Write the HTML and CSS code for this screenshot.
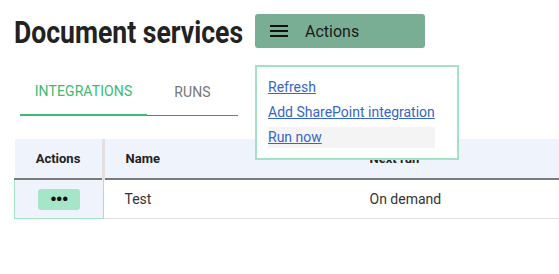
FILE: index.html
```html
<!DOCTYPE html>
<html lang="en">
<head>
    <meta charset="UTF-8">
    <title>Document services</title>
    <link rel="stylesheet" href="styles.css">
</head>
<body>
    <div class="page">
        <div class="header">
            <h1 class="title"><span class="title-text">Document services</span></h1>
            <div class="menu-wrap">
                <button class="actions-btn">
                    <svg class="burger" width="18" height="12" viewBox="0 0 18 12">
                        <rect x="0" y="0" width="18" height="2"/>
                        <rect x="0" y="5" width="18" height="2"/>
                        <rect x="0" y="10" width="18" height="2"/>
                    </svg>
                    <span>Actions</span>
                </button>
            </div>
        </div>

        <div class="tabs">
            <div class="tab active">INTEGRATIONS</div>
            <div class="tab">RUNS</div>
        </div>

        <div class="table-wrap">
            <table class="grid">
                <thead>
                    <tr>
                        <th class="col-actions">Actions</th>
                        <th class="col-name">Name</th>
                        <th class="col-next">Next run</th>
                    </tr>
                </thead>
                <tbody>
                    <tr>
                        <td class="col-actions cell-focus"><span class="dots">&bull;&bull;&bull;</span></td>
                        <td class="col-name">Test</td>
                        <td class="col-next">On demand</td>
                    </tr>
                </tbody>
            </table>
        </div>
    </div>

    <div class="dropdown">
        <a href="#" class="item">Refresh</a>
        <a href="#" class="item">Add SharePoint integration</a>
        <a href="#" class="item hover">Run now</a>
    </div>
</body>
</html>
```

FILE: styles.css
```css
body {
    margin: 0;
    font-family: Roboto, "Liberation Sans", sans-serif;
    background-color: white;
    color: #222;
    overflow: hidden;
}
.page {
    padding: 14px 0 0 14px;
}
.header {
    display: flex;
    align-items: center;
    gap: 12px;
    height: 34px;
}
.title {
    margin: 0;
    font-family: Roboto, sans-serif;
    font-size: 32px;
    font-weight: 700;
    color: #222;
    line-height: 34px;
    width: 229px;
    flex-shrink: 0;
    white-space: nowrap;
}
/* no condensed face installed, so squeeze the regular one */
.title-text {
    display: inline-block;
    transform: scaleX(0.83) translateY(1px);
    transform-origin: left center;
}
.actions-btn {
    display: flex;
    align-items: center;
    width: 170px;
    height: 34px;
    background-color: #7aae94;
    border: none;
    border-radius: 3px;
    padding: 0 0 0 15px;
    font-family: Roboto, sans-serif;
    font-size: 16px;
    color: #1a1a1a;
    cursor: pointer;
}
.burger {
    fill: #111;
    margin-right: 17px;
}
.tabs {
    display: flex;
    margin: 20px 0 0 6px;
    width: 218px;
    border-bottom: 1px solid #777;
    height: 47px;
}
.tab {
    display: flex;
    align-items: center;
    justify-content: center;
    font-size: 14px;
    color: #777;
    width: 91px;
    letter-spacing: 0.1px;
}
.tab.active {
    width: 127px;
    color: #3dba74;
    border-bottom: 2px solid #3dba74;
    margin-bottom: -1px;
    height: 46px;
}
.table-wrap {
    margin-top: 23px;
}
.grid {
    border-collapse: collapse;
    width: 700px;
    font-size: 14px;
}
.grid th {
    background-color: #eff4fc;
    height: 39px;
    text-align: left;
    font-weight: 700;
    font-size: 13px;
    color: #222;
    border-bottom: 2px solid #7a7a7a;
    padding: 0 0 0 21px;
}
.grid th.col-actions {
    text-align: center;
    padding: 0;
    border-right: 3px solid #e0e0e0;
}
.grid td {
    height: 38px;
    padding: 0 0 0 21px;
    border-bottom: 1px solid #e2e2e2;
    color: #333;
}
.col-actions {
    width: 87px;
}
.col-name {
    width: 223px;
}
.grid td.col-actions {
    text-align: center;
    padding: 0;
    background-color: #eff4fc;
    border: 1px solid #a5e3c6;
}
.dots {
    display: inline-block;
    vertical-align: middle;
    width: 42px;
    height: 21px;
    line-height: 21px;
    background-color: #a5e6c9;
    border-radius: 3px;
    font-size: 19px;
    font-weight: 700;
    color: #111;
    letter-spacing: -1px;
}
.dropdown {
    position: absolute;
    left: 255px;
    top: 65px;
    width: 167px;
    padding: 10px 22px 10px 11px;
    background-color: white;
    border: 2px solid #a3e2c4;
    display: flex;
    flex-direction: column;
    gap: 4px;
}
.item {
    display: block;
    height: 21px;
    line-height: 21px;
    font-size: 14px;
    color: #3566c8;
    text-decoration: underline;
}
.item.hover {
    background-color: #f4f4f4;
}
```
